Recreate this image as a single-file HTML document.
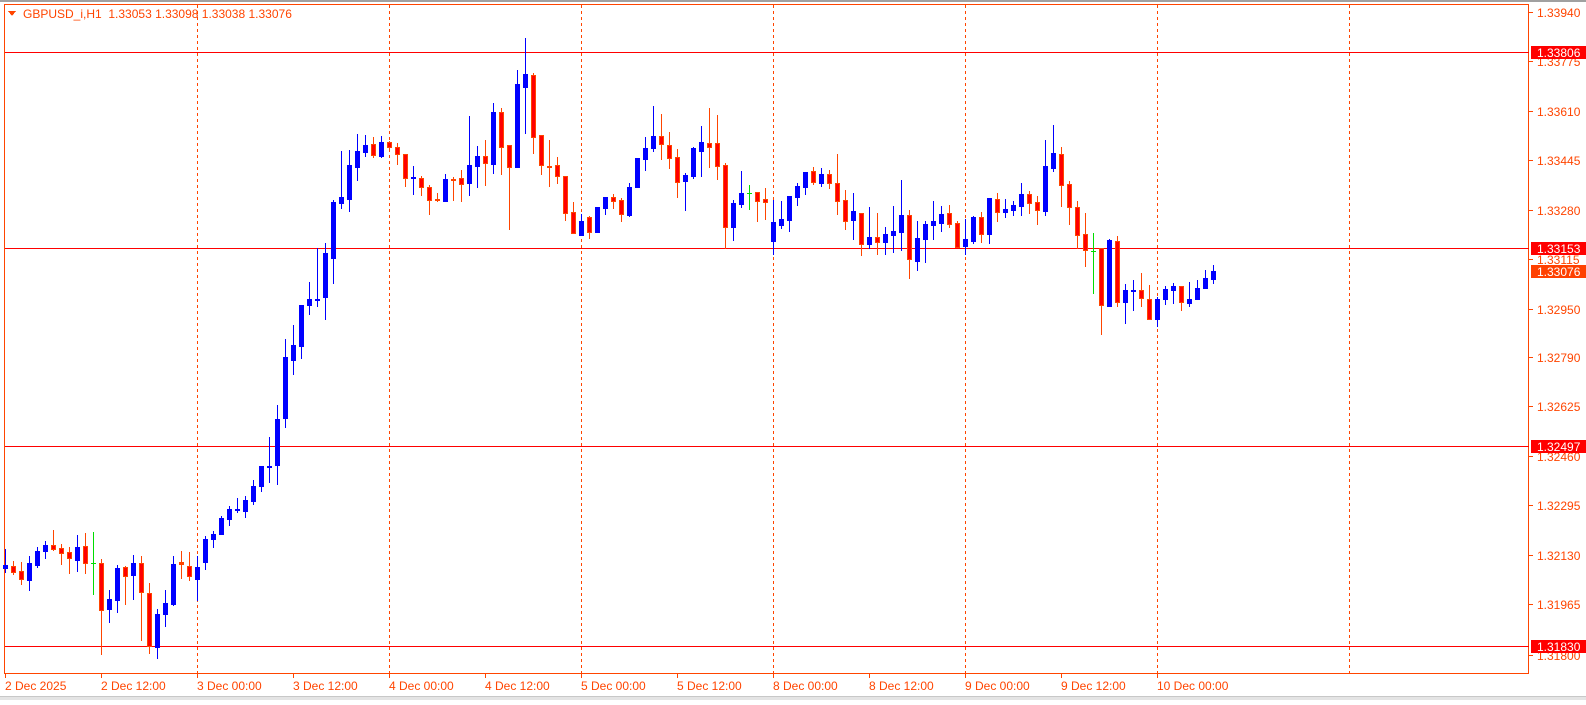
<!DOCTYPE html>
<html><head><meta charset="utf-8">
<style>
html,body{margin:0;padding:0;background:#fff;}
body{width:1586px;height:700px;overflow:hidden;position:relative;font-family:"Liberation Sans",sans-serif;}
svg text{font-family:"Liberation Sans",sans-serif;font-size:12px;}
</style></head>
<body>
<svg id="c" width="1586" height="700" xmlns="http://www.w3.org/2000/svg" shape-rendering="crispEdges">
<rect x="0" y="0" width="1586" height="2" fill="#a0a0a0"/>
<rect x="0" y="696" width="1586" height="4" fill="#e4e4e4"/>
<rect x="0" y="696" width="1586" height="1" fill="#c8c8c8"/>
<rect x="4.5" y="4.5" width="1524" height="669" fill="none" stroke="#ff4500" stroke-width="1"/>
<g id="grid" stroke="#ff4500" stroke-width="1" stroke-dasharray="3,3"></g>
<g stroke="#ff0000" stroke-width="1">
<line x1="5" y1="52.5" x2="1529" y2="52.5"/>
<line x1="5" y1="248.5" x2="1529" y2="248.5"/>
<line x1="5" y1="446.5" x2="1529" y2="446.5"/>
<line x1="5" y1="646.5" x2="1529" y2="646.5"/>
</g>
<g id="candles"></g>
<g id="axis" fill="#ff4500"></g>
<polygon points="8,11 16,11 12,16" fill="#ff4500"/>
<text x="23" y="18" fill="#ff4500">GBPUSD_i,H1&#160;&#160;1.33053 1.33098 1.33038 1.33076</text>
</svg>
<script>
var NS="http://www.w3.org/2000/svg";
function el(p,t,a,txt){var e=document.createElementNS(NS,t);for(var k in a)e.setAttribute(k,a[k]);if(txt)e.textContent=txt;p.appendChild(e);return e;}
var grid=document.getElementById('grid');
[197,389,581,773,965,1157,1349].forEach(function(x){el(grid,'line',{x1:x+.5,y1:5,x2:x+.5,y2:673});});
var D=[
[5,'b',565,568,549,572],[13,'r',566,572,561,574],[21,'r',571,579,562,584],[29,'b',563,580,556,590],[37,'b',551,565,547,567],[45,'b',545,551,541,558],[53,'r',545,549,530,550],[61,'r',548,553,544,564],[69,'r',552,558,547,573],[77,'b',547,560,535,571],[85,'r',546,563,533,573],[93,'g',563,563,532,594],[101,'r',563,610,559,654],[109,'b',599,609,590,622],[117,'b',568,600,565,612],[125,'r',567,576,566,604],[133,'b',563,575,555,599],[141,'r',563,592,556,640],[149,'r',593,646,583,653],[157,'b',614,647,609,658],[165,'b',603,614,590,626],[173,'b',564,604,556,605],[181,'r',562,564,551,578],[189,'r',566,576,552,580],[197,'b',567,579,556,600],[205,'b',539,562,536,569],[213,'b',534,539,531,547],[221,'b',518,534,516,534],[229,'b',509,519,506,525],[237,'b',509,510,498,512],[245,'b',500,511,496,517],[253,'b',486,501,480,504],[261,'b',466,486,466,491],[269,'b',466,467,437,482],[277,'b',419,465,405,484],[285,'b',357,418,339,427],[293,'b',345,360,325,374],[301,'b',305,346,305,358],[309,'b',299,305,282,314],[317,'b',299,300,248,306],[325,'b',253,297,243,319],[333,'b',202,258,200,283],[341,'b',197,203,151,208],[349,'b',165,199,150,211],[357,'b',151,167,134,180],[365,'b',145,152,135,156],[373,'r',144,155,137,157],[381,'b',142,156,136,157],[389,'r',142,147,141,148],[397,'r',147,154,143,164],[405,'r',154,178,154,186],[413,'b',177,178,166,194],[421,'r',178,187,176,195],[429,'r',187,200,185,214],[437,'r',199,200,193,201],[445,'b',179,201,174,201],[453,'r',179,180,177,200],[461,'r',178,184,170,201],[469,'b',165,183,116,195],[477,'b',156,166,146,187],[485,'r',156,163,140,185],[493,'b',112,164,103,173],[501,'r',112,147,108,174],[509,'r',145,167,145,229],[517,'b',84,167,70,167],[525,'b',74,87,38,133],[533,'r',75,137,73,153],[541,'r',135,165,135,174],[549,'r',166,167,140,186],[557,'r',165,176,157,183],[565,'r',176,213,176,220],[573,'r',212,233,202,233],[581,'b',221,235,214,235],[589,'r',217,232,216,238],[597,'b',207,232,207,232],[605,'b',197,208,197,214],[613,'r',197,201,194,208],[621,'r',200,214,198,221],[629,'b',187,215,183,216],[637,'b',158,187,158,187],[645,'b',148,159,137,170],[653,'b',136,148,106,151],[661,'r',136,144,114,159],[669,'r',145,158,132,168],[677,'r',157,182,149,197],[685,'b',175,181,173,210],[693,'b',148,176,147,178],[701,'b',142,151,126,176],[709,'r',143,147,108,167],[717,'r',143,166,115,179],[725,'r',165,227,163,248],[733,'b',203,227,200,240],[741,'b',193,204,171,207],[749,'g',193,193,185,209],[757,'r',192,201,192,221],[765,'r',199,202,188,219],[773,'b',222,241,200,254],[781,'b',219,225,201,228],[789,'b',196,220,196,231],[797,'b',186,197,183,205],[805,'b',172,187,172,194],[813,'r',171,182,167,184],[821,'b',174,183,168,186],[829,'r',174,183,170,188],[837,'r',183,201,154,214],[845,'r',200,221,190,229],[853,'b',211,220,193,239],[861,'r',213,244,213,255],[869,'b',237,244,207,248],[877,'r',237,242,213,254],[885,'b',234,242,227,254],[893,'b',231,235,206,252],[901,'b',215,232,180,250],[909,'r',215,259,210,278],[917,'b',238,261,221,270],[925,'b',224,239,221,262],[933,'b',221,225,201,239],[941,'b',214,223,206,231],[949,'r',213,224,205,227],[957,'r',223,247,221,247],[965,'b',239,246,219,254],[973,'b',217,241,216,243],[981,'r',217,234,212,242],[989,'b',198,234,198,243],[997,'r',199,212,193,221],[1005,'b',209,212,199,217],[1013,'b',205,210,201,215],[1021,'b',194,206,183,215],[1029,'r',194,203,191,213],[1037,'r',202,210,196,224],[1045,'b',166,211,140,215],[1053,'b',153,168,125,171],[1061,'r',154,185,147,206],[1069,'r',184,207,181,224],[1077,'r',207,235,201,248],[1085,'r',234,250,213,266],[1093,'g',251,251,233,293],[1101,'r',248,305,248,334],[1109,'b',240,306,239,306],[1117,'r',241,302,236,306],[1125,'b',290,302,284,323],[1133,'b',290,291,280,310],[1141,'r',290,298,273,306],[1149,'r',299,319,285,319],[1157,'b',299,319,297,326],[1165,'b',289,299,286,304],[1173,'b',286,290,283,303],[1181,'r',286,302,286,310],[1189,'b',299,303,282,306],[1197,'b',288,299,280,299],[1205,'b',278,288,270,288],[1213,'b',271,279,265,283]
];
var g=document.getElementById('candles');
D.forEach(function(d){
 var x=d[0],t=d[1],top=d[2],bot=d[3],hi=d[4],lo=d[5];
 var wc=t=='b'?'#0000ff':(t=='g'?'#00dd00':'#ff4500');
 el(g,'rect',{x:x,y:hi,width:1,height:Math.max(1,lo-hi+1),fill:wc});
 if(bot-top<=1){el(g,'rect',{x:x-2,y:top,width:5,height:Math.max(1,bot-top+1),fill:wc});return;}
 if(t=='b'){el(g,'rect',{x:x-2,y:top,width:5,height:bot-top+1,fill:'#0000ff'});}
 else{el(g,'rect',{x:x-2,y:top,width:5,height:bot-top+1,fill:'#ff4500'});
  if(bot-top>2)el(g,'rect',{x:x-1,y:top+1,width:3,height:bot-top-1,fill:'#ff0000'});}
});
var ax=document.getElementById('axis');
var P=[['1.33940',12],['1.33775',61],['1.33610',111],['1.33445',160],['1.33280',210],['1.33115',259],['1.32950',309],['1.32790',357],['1.32625',406],['1.32460',456],['1.32295',505],['1.32130',555],['1.31965',604],['1.31800',655]];
P.forEach(function(p){el(ax,'rect',{x:1529,y:p[1],width:4,height:1,fill:'#ff4500'});el(ax,'text',{x:1537,y:p[1]+5,fill:'#ff4500'},p[0]);});
[['1.33806',52,'#ff0000'],['1.33153',248,'#ff0000'],['1.33076',271,'#ff4000'],['1.32497',446,'#ff0000'],['1.31830',646,'#ff0000']].forEach(function(p){
 el(ax,'rect',{x:1531,y:p[1]-6,width:55,height:13,fill:p[2]});
 el(ax,'text',{x:1537,y:p[1]+5,fill:'#ffffff'},p[0]);});
var L=['2 Dec 2025','2 Dec 12:00','3 Dec 00:00','3 Dec 12:00','4 Dec 00:00','4 Dec 12:00','5 Dec 00:00','5 Dec 12:00','8 Dec 00:00','8 Dec 12:00','9 Dec 00:00','9 Dec 12:00','10 Dec 00:00'];
L.forEach(function(s,i){var x=5+96*i;el(ax,'rect',{x:x,y:674,width:1,height:4,fill:'#ff4500'});el(ax,'text',{x:x,y:690,fill:'#ff4500'},s);});
</script>
</body></html>
